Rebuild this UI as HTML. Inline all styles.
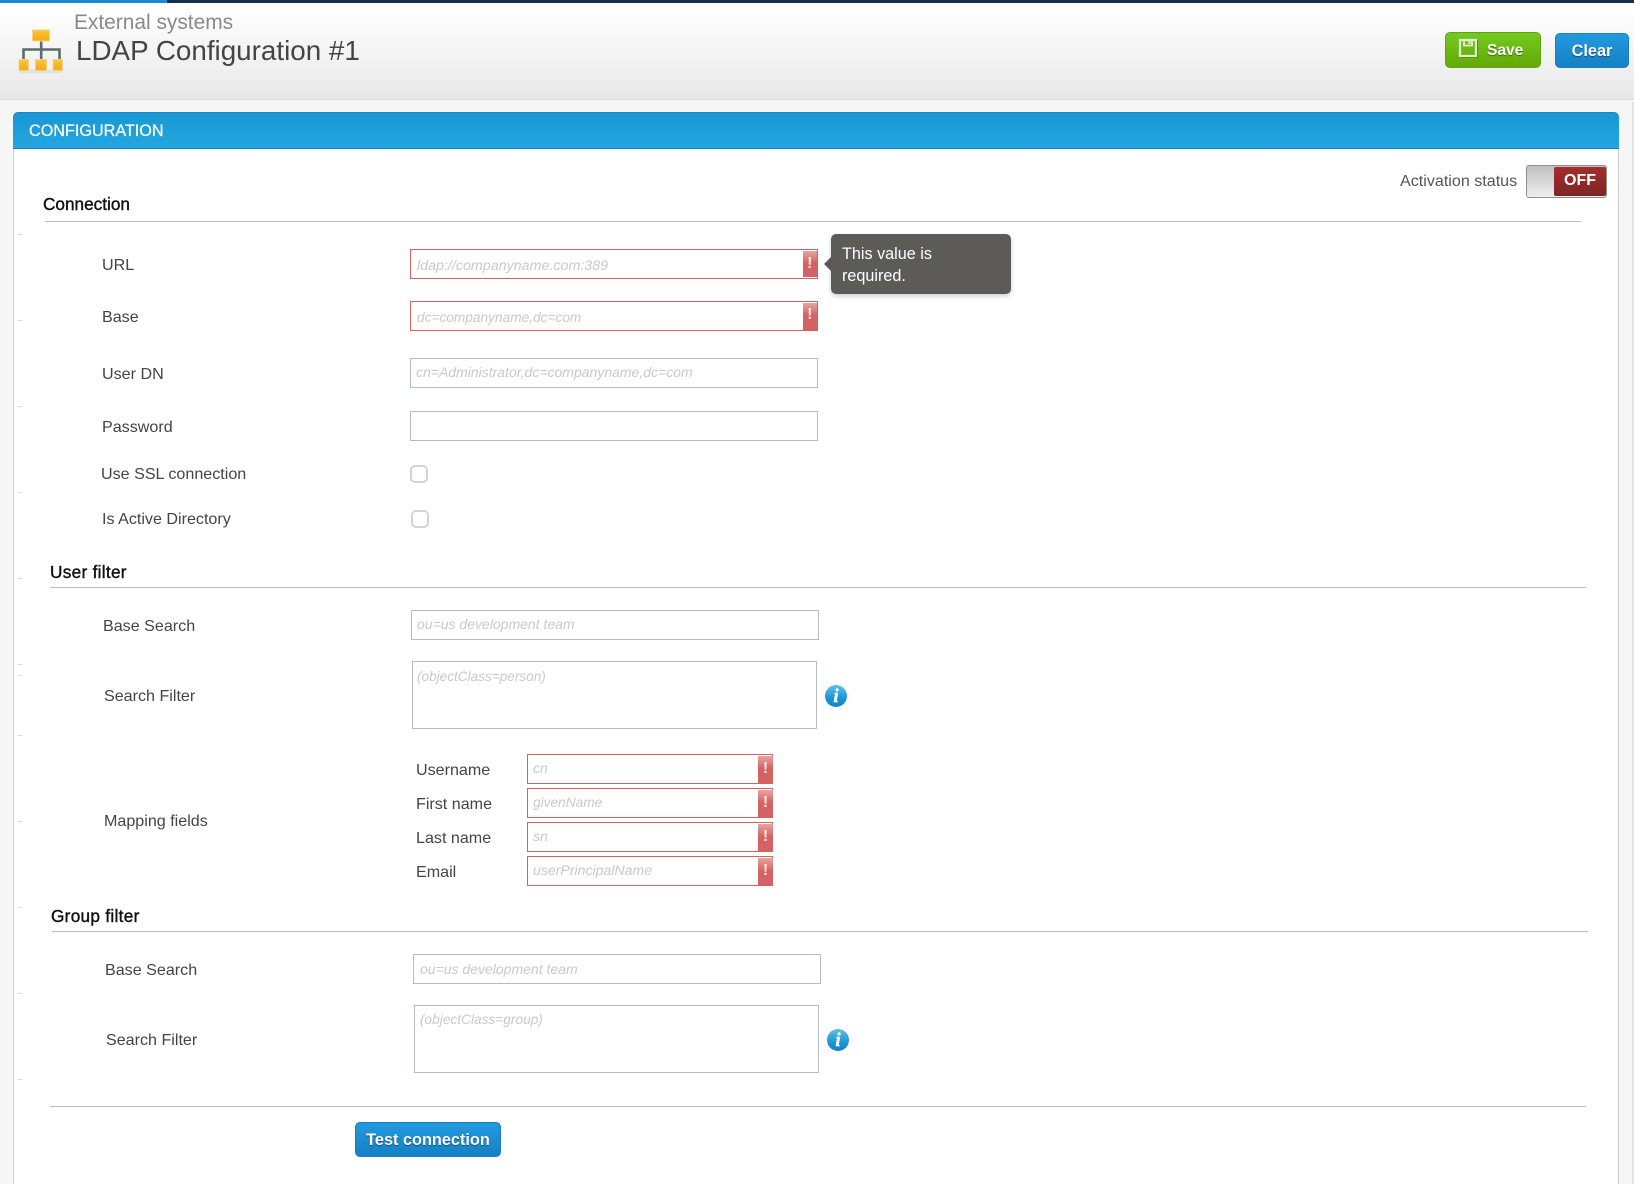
<!DOCTYPE html>
<html><head><meta charset="utf-8"><title>LDAP Configuration</title>
<style>
html,body{margin:0;padding:0;width:1634px;height:1184px;overflow:hidden}
body{position:relative;background:#f6f6f6;font-family:"Liberation Sans",sans-serif}
.a{position:absolute}
.t{position:absolute;white-space:nowrap;height:24px;line-height:24px;margin-top:-11px}
.l{font-size:16.1px;color:#444}
.h{font-size:17.2px;color:#111;-webkit-text-stroke:.4px #111}
.p{font-size:14px;font-style:italic;color:#c9c9c9}
.i{position:absolute;box-sizing:border-box;background:#fff;border:1.5px solid #b4bac9}
.e{position:absolute;box-sizing:border-box;background:#fff;border:1.5px solid #d66060}
.b{position:absolute;background:linear-gradient(#e8a4a4,#d46262 45%);color:#f6e6e6;font-weight:bold;font-size:16px;text-align:center}
.r{position:absolute;height:1px;background:#bcbcc2}
.k{position:absolute;left:17px;width:5px;height:1px;background:#ddd}
.c{position:absolute;box-sizing:border-box;width:18px;height:18px;border:2px solid #d4d4d4;border-radius:5px;background:#fff}
.n{position:absolute;width:22px;height:22px;border-radius:50%;background:linear-gradient(#62bfe9,#2fa5dd 40%,#1a8fce 70%,#1582bd);color:#fff;font:italic bold 19px/23px "Liberation Serif",serif;-webkit-text-stroke:.4px #fff;text-align:center}
.btn{position:absolute;box-sizing:border-box;border-radius:5px;color:#fff;font-weight:bold;text-align:center;text-shadow:0 1px 1px rgba(0,0,0,.45)}
.blue{background:linear-gradient(#229ade,#1680c4);border:1px solid #1a7fbf}
</style></head><body>

<div class="a" style="left:0;top:0;width:1634px;height:99px;background:linear-gradient(#fff 8%,#e8e8e8);border-bottom:1.5px solid #dcdcdc"></div>
<div class="a" style="left:0;top:0;width:1634px;height:3px;background:#14304f"></div>
<div class="a" style="left:0;top:0;width:167px;height:3px;background:#1c8ad0"></div>

<svg class="a" style="left:16px;top:26px" width="50" height="50" viewBox="0 0 50 50">
<defs><linearGradient id="g" x1="0" y1="0" x2="0" y2="1"><stop offset="0" stop-color="#fbc53a"/><stop offset="1" stop-color="#f3aa12"/></linearGradient></defs>
<rect x="3" y="44" width="43" height="3" fill="#e0e0e0"/>
<path d="M7.5 33V23.5H43.5V33M25.2 15V33" fill="none" stroke="#5a6c70" stroke-width="2.6"/>
<rect x="16.5" y="4" width="17" height="11" fill="url(#g)" stroke="#f7d28a" stroke-width="1"/>
<rect x="3" y="33.5" width="9.5" height="11" fill="url(#g)" stroke="#f7d28a" stroke-width=".8"/>
<rect x="19.5" y="33.5" width="11" height="11" fill="url(#g)" stroke="#f7d28a" stroke-width=".8"/>
<rect x="37" y="33.5" width="9.5" height="11" fill="url(#g)" stroke="#f7d28a" stroke-width=".8"/>
</svg>

<div class="t" style="left:74px;top:22px;font-size:20.9px;color:#8a8a8a">External systems</div>
<div class="t" style="left:76px;top:50px;font-size:27.8px;color:#444">LDAP Configuration #1</div>

<div class="btn" style="left:1445px;top:32px;width:96px;height:36px;background:linear-gradient(#72cb1e,#64a908);border:1px solid #62a30b"></div>
<svg class="a" style="left:1458px;top:38px" width="20" height="20" viewBox="0 0 20 20"><path d="M2 2H18V18H2Z" fill="none" stroke="#e4edd6" stroke-width="2.2"/><path d="M6 2V7.5H14V2" fill="none" stroke="#e4edd6" stroke-width="1.8"/><rect x="10.5" y="3" width="2" height="3" fill="#e4edd6"/><path d="M2 19.4H19.4V2" fill="none" stroke="#4f8a0a" stroke-width=".8"/></svg>
<div class="t" style="left:1487px;top:50px;font-size:15.5px;font-weight:bold;color:#fff;text-shadow:0 1px 1px rgba(0,0,0,.45)">Save</div>
<div class="btn blue" style="left:1555px;top:33px;width:74px;height:35px;font-size:16.3px;line-height:34px">Clear</div>

<div class="a" style="left:1632px;top:102px;width:2px;height:1082px;background:#e2e2e2"></div>

<div class="a" style="left:13px;top:112px;width:1606px;height:1072px;box-sizing:border-box;background:#fff;border:1px solid #c8c8c8;border-left:1.5px solid #cfcfcf;border-bottom:0;border-radius:5px 5px 0 0"></div>
<div class="a" style="left:13px;top:112px;width:1606px;height:37px;box-sizing:border-box;background:linear-gradient(#1897d4,#23a7e0);border-top:1px solid #1a86c6;border-bottom:1.5px solid #1580c0;border-radius:5px 5px 0 0"></div>
<div class="t" style="left:29px;top:129.5px;font-size:16.2px;color:#fff;-webkit-text-stroke:.25px #fff">CONFIGURATION</div>

<div class="k" style="top:234px"></div><div class="k" style="top:320px"></div><div class="k" style="top:406px"></div><div class="k" style="top:492px"></div><div class="k" style="top:578px"></div><div class="k" style="top:664px"></div><div class="k" style="top:675px"></div><div class="k" style="top:735px"></div><div class="k" style="top:821px"></div><div class="k" style="top:907px"></div><div class="k" style="top:993px"></div><div class="k" style="top:1079px"></div>

<div class="t l" style="left:1400px;top:180px;color:#555">Activation status</div>
<div class="a" style="left:1526px;top:165px;width:81px;height:33px;box-sizing:border-box;border:1.5px solid #8f8f8f;border-radius:3px;background:linear-gradient(#c0c0c0,#eeeeee)"></div>
<div class="a" style="left:1554px;top:167px;width:52px;height:29px;background:linear-gradient(#a82c2c,#7c2626);border-radius:2px;color:#fff;font-weight:bold;font-size:16px;line-height:28px;text-align:center">OFF</div>

<div class="t h" style="left:43px;top:203px">Connection</div>
<div class="r" style="left:45px;top:221px;width:1536px"></div>

<div class="t l" style="left:102px;top:264px">URL</div>
<div class="e" style="left:410px;top:249px;width:408px;height:30px"></div>
<div class="b" style="left:803px;top:251px;width:13.5px;height:26px;line-height:26px">!</div>
<div class="t p" style="left:417px;top:265px;font-size:14.27px">ldap://companyname.com:389</div>

<div class="a" style="left:824px;top:257px;width:0;height:0;border:7px solid transparent;border-left:0;border-right-color:#5c5b57"></div>
<div class="a" style="left:831px;top:234px;width:180px;height:60px;background:#5c5b57;border-radius:5px;box-shadow:0 2px 5px rgba(0,0,0,.2)"></div>
<div class="t" style="left:842px;top:253px;font-size:16.2px;color:#fff">This value is</div>
<div class="t" style="left:842px;top:275px;font-size:16.2px;color:#fff">required.</div>

<div class="t l" style="left:102px;top:316px">Base</div>
<div class="e" style="left:410px;top:301px;width:408px;height:30px"></div>
<div class="b" style="left:803px;top:303px;width:13.5px;height:27px;line-height:24px">!</div>
<div class="t p" style="left:417px;top:317px;font-size:13.7px">dc=companyname,dc=com</div>

<div class="t l" style="left:102px;top:373px">User DN</div>
<div class="i" style="left:410px;top:358px;width:408px;height:30px"></div>
<div class="t p" style="left:416px;top:371px">cn=Administrator,dc=companyname,dc=com</div>

<div class="t l" style="left:102px;top:426px">Password</div>
<div class="i" style="left:410px;top:411px;width:408px;height:30px"></div>

<div class="t l" style="left:101px;top:473px">Use SSL connection</div>
<div class="c" style="left:410px;top:465px"></div>
<div class="t l" style="left:102px;top:518px">Is Active Directory</div>
<div class="c" style="left:411px;top:510px"></div>

<div class="t h" style="left:50px;top:571px;letter-spacing:.3px">User filter</div>
<div class="r" style="left:50px;top:587px;width:1536px"></div>

<div class="t l" style="left:103px;top:625px">Base Search</div>
<div class="i" style="left:411px;top:610px;width:408px;height:30px"></div>
<div class="t p" style="left:417px;top:623px">ou=us development team</div>

<div class="t l" style="left:104px;top:695px">Search Filter</div>
<div class="i" style="left:412px;top:661px;width:405px;height:68px"></div>
<div class="t p" style="left:417px;top:676px;font-size:13.6px">(objectClass=person)</div>
<div class="n" style="left:825px;top:685px">i</div>

<div class="t l" style="left:104px;top:820px">Mapping fields</div>

<div class="t l" style="left:416px;top:769px">Username</div>
<div class="e" style="left:527px;top:754px;width:246px;height:30px"></div>
<div class="b" style="left:758px;top:756px;width:15px;height:28px;line-height:26px">!</div>
<div class="t p" style="left:533px;top:767px">cn</div>

<div class="t l" style="left:416px;top:803px">First name</div>
<div class="e" style="left:527px;top:788px;width:246px;height:30px"></div>
<div class="b" style="left:758px;top:790px;width:15px;height:28px;line-height:26px">!</div>
<div class="t p" style="left:533px;top:802px;font-size:13.7px">givenName</div>

<div class="t l" style="left:416px;top:837px">Last name</div>
<div class="e" style="left:527px;top:822px;width:246px;height:30px"></div>
<div class="b" style="left:758px;top:824px;width:15px;height:28px;line-height:26px">!</div>
<div class="t p" style="left:533px;top:835px">sn</div>

<div class="t l" style="left:416px;top:871px">Email</div>
<div class="e" style="left:527px;top:856px;width:246px;height:30px"></div>
<div class="b" style="left:758px;top:858px;width:15px;height:28px;line-height:26px">!</div>
<div class="t p" style="left:533px;top:869px;font-size:14.1px">userPrincipalName</div>

<div class="t h" style="left:51px;top:915px;letter-spacing:.3px">Group filter</div>
<div class="r" style="left:52px;top:931px;width:1536px"></div>

<div class="t l" style="left:105px;top:969px">Base Search</div>
<div class="i" style="left:413px;top:954px;width:408px;height:30px"></div>
<div class="t p" style="left:420px;top:968px">ou=us development team</div>

<div class="t l" style="left:106px;top:1039px">Search Filter</div>
<div class="i" style="left:414px;top:1005px;width:405px;height:68px"></div>
<div class="t p" style="left:420px;top:1018.5px;font-size:13.7px">(objectClass=group)</div>
<div class="n" style="left:827px;top:1029px">i</div>

<div class="r" style="left:50px;top:1106px;width:1536px"></div>
<div class="btn blue" style="left:355px;top:1122px;width:146px;height:35px;font-size:16.3px;line-height:34px">Test connection</div>

</body></html>
